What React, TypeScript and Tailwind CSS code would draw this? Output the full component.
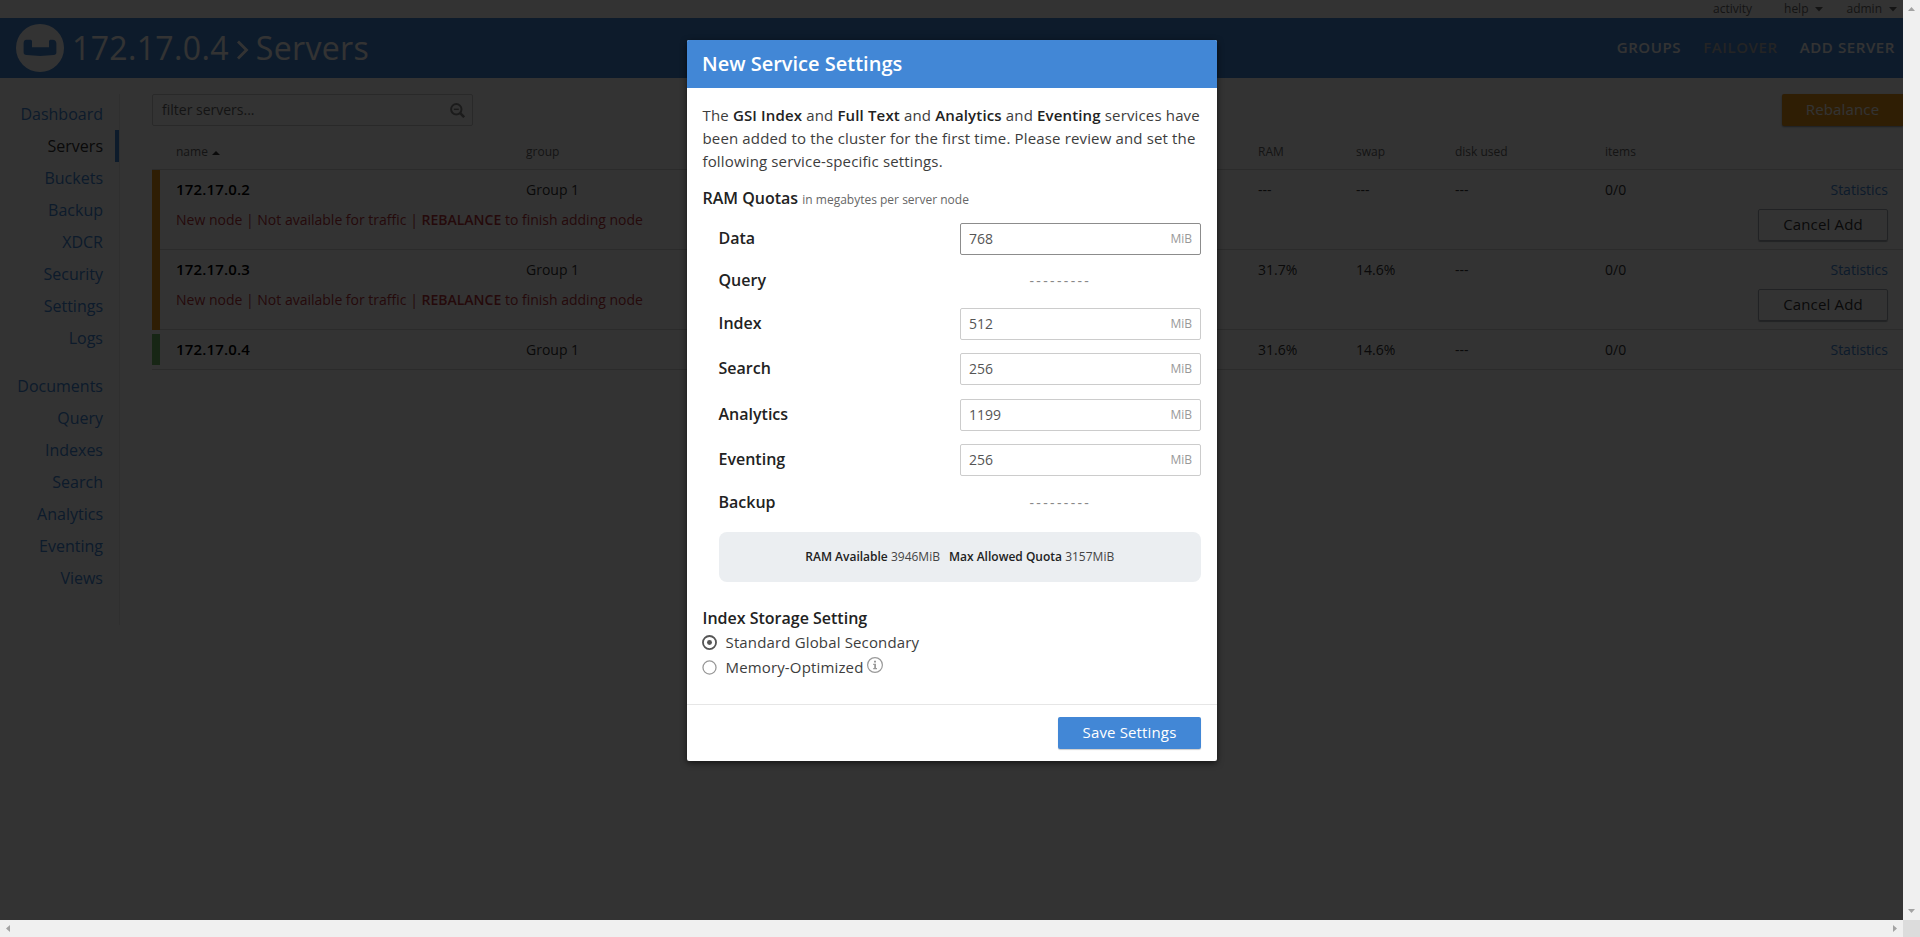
import type { ReactNode } from "react";

const primaryNav = ["Dashboard", "Servers", "Buckets", "Backup", "XDCR", "Security", "Settings", "Logs"];
const dataNav = ["Documents", "Query", "Indexes", "Search", "Analytics", "Eventing", "Views"];

type Server = { name: string; ram: string; swap: string; pending: boolean };

const servers: Server[] = [
  { name: "172.17.0.2", ram: "---", swap: "---", pending: true },
  { name: "172.17.0.3", ram: "31.7%", swap: "14.6%", pending: true },
  { name: "172.17.0.4", ram: "31.6%", swap: "14.6%", pending: false },
];

function Caret({ className }: { className: string }) {
  return (
    <svg className={className} width="8" height="5" viewBox="0 0 8 5" fill="currentColor">
      <path d="M0 0h8L4 4.600z" />
    </svg>
  );
}

function Logo() {
  return (
    <svg className="h-12 w-12 shrink-0" viewBox="0 0 48 48">
      <circle cx="24" cy="24" r="24" fill="#fff" />
      <path
        d="M7.6 19.5c0-2.4.8-3.8 2.6-3.8h3.8c1.4 0 2 .6 2 1.8v5.7h17v-5.7c0-1.200.6-1.800 2-1.800h1.800c2 0 3.600 1.400 3.600 3.800v8.700c0 1.700-.9 2.600-2.700 2.900-8.500 1.100-18.500 1.100-27.200 0-2-.3-2.900-1.200-2.900-2.900z"
        fill="#4287d6"
      />
    </svg>
  );
}

function NavItem({ label, active }: { label: string; active?: boolean }) {
  return (
    <li
      className={
        active
          ? "h-8 border-r-4 border-[#4287d6] pr-3 text-right text-[16px] leading-8 text-[#333]"
          : "h-8 pr-4 text-right text-[16px] leading-8 text-[#4287d6]"
      }
    >
      {label}
    </li>
  );
}

function ServerRow({ server }: { server: Server }) {
  return (
    <div className={server.pending ? "flex h-20" : "flex h-10 border-b border-[#d5d5d5]"}>
      <div className={server.pending ? "w-2 shrink-0 bg-[#e89418]" : "my-1 w-2 shrink-0 bg-[#75bd6c]"} />
      <div className={server.pending ? "w-[1743px] border-b border-[#d5d5d5] pt-2" : "w-[1743px] pt-2"}>
        <div className="flex h-6 text-[14px] leading-6 text-[#333]">
          <div className="w-[366px] pl-4 text-[15px] leading-[22px] font-semibold tracking-[0.15px] text-black">
            {server.name}
          </div>
          <div className="w-[732px]">Group 1</div>
          <div className="w-[98px]">{server.ram}</div>
          <div className="w-[99px]">{server.swap}</div>
          <div className="w-[150px]">---</div>
          <div className="flex-1">0/0</div>
          <div className="pr-[15px] text-[#4287d6]">Statistics</div>
        </div>
        {server.pending && (
          <div className="flex justify-between pl-4 pr-[15px]">
            <p className="pt-1.5 text-[14px] leading-6 text-[#b8323a]">
              New node | Not available for traffic | <span className="font-semibold">REBALANCE</span> to finish adding
              node
            </p>
            <button className="mt-[7px] h-8 w-[130px] rounded-xs border border-[#a5abb2] pb-px text-[15px] leading-none tracking-[0.15px] text-[#333] shadow-[0_1px_1px_#a5abb2]">
              Cancel Add
            </button>
          </div>
        )}
      </div>
    </div>
  );
}

function Page() {
  return (
    <div className="h-[920px] w-[1903px] overflow-hidden bg-white">
      <div className="flex h-[18px] items-center justify-end pr-1.5 text-[12px] leading-[18px] text-[#666]">
        <span className="mr-8">activity</span>
        <span>help</span>
        <Caret className="mr-[23px] ml-[7px]" />
        <span>admin</span>
        <Caret className="ml-[7px]" />
      </div>
      <header className="flex h-[60px] items-center bg-[#4287d6] pr-2 pl-4 text-white">
        <Logo />
        <h1 className="ml-2 flex flex-1 items-center text-[32px] tracking-[0.35px]">
          172.17.0.4
          <svg className="mt-1 mr-[7px] ml-[7px]" width="13" height="22" viewBox="0 0 13 22" fill="none" stroke="currentColor" strokeWidth="2.800">
            <path d="M2 2.500l8.500 8.500L2 19.500" />
          </svg>
          Servers
        </h1>
        <nav className="flex gap-[22px] pb-px text-[15px] font-semibold tracking-[0.6px]">
          <span>GROUPS</span>
          <span className="text-[#b3b3b3]">FAILOVER</span>
          <span>ADD SERVER</span>
        </nav>
      </header>
      <div className="flex pt-4">
        <aside className="h-[531px] w-[120px] shrink-0 border-r border-[#ebebeb] pt-1">
          <ul>
            {primaryNav.map((label) => (
              <NavItem key={label} label={label} active={label === "Servers"} />
            ))}
          </ul>
          <ul className="mt-4">
            {dataNav.map((label) => (
              <NavItem key={label} label={label} />
            ))}
          </ul>
        </aside>
        <main className="ml-8 w-[1751px] shrink-0">
          <div className="flex h-8 justify-between">
            <div className="flex w-[321px] items-center justify-between rounded-xs border border-[#ccc] pr-[7px] pb-px pl-[9px] text-[14px] text-[#666]">
              filter servers...
              <svg className="mt-px" width="15" height="15" viewBox="0 0 15 15" fill="none" stroke="#888" strokeWidth="2">
                <circle cx="6.300" cy="6.300" r="5.200" />
                <path d="M3.800 6.300h5" strokeWidth="1.500" />
                <path d="M10.200 10.200l4 4" strokeWidth="2.600" />
              </svg>
            </div>
            <button className="h-8 w-[121px] rounded-l-xs bg-[#e89418] pb-px text-[15px] tracking-[0.15px] text-white shadow-[0_1px_2px_#8c959f]">
              Rebalance
            </button>
          </div>
          <div className="flex h-11 border-b border-[#d5d5d5] pl-6 text-[12px] leading-[51px] text-[#666]">
            <div className="flex w-[350px] items-start">
              name
              <svg className="mt-[25px] ml-1" width="8" height="4" viewBox="0 0 8 4" fill="#333">
                <path d="M0 4h8L4 0z" />
              </svg>
            </div>
            <div className="w-[732px]">group</div>
            <div className="w-[98px]">RAM</div>
            <div className="w-[99px]">swap</div>
            <div className="w-[150px]">disk used</div>
            <div>items</div>
          </div>
          {servers.map((server) => (
            <ServerRow key={server.name} server={server} />
          ))}
        </main>
      </div>
    </div>
  );
}

function Quota({ label, value, className, active }: { label: string; value: string; className: string; active?: boolean }) {
  return (
    <div className={`flex h-8 justify-between ${className}`}>
      <label className="text-[16px] leading-[30px] font-semibold text-[#222]">{label}</label>
      <div
        className={
          active
            ? "flex w-[241px] items-center justify-between rounded-xs border border-[#8c8c8c] px-2 text-[14px] text-[#555]"
            : "flex w-[241px] items-center justify-between rounded-xs border border-[#ccc] px-2 text-[14px] text-[#555]"
        }
      >
        {value}
        <span className="text-[12px] text-[#999]">MiB</span>
      </div>
    </div>
  );
}

function NoQuota({ label, className }: { label: string; className: string }) {
  return (
    <div className={`flex h-6 ${className}`}>
      <span className="w-[311px] text-[16px] leading-6 font-semibold text-[#222]">{label}</span>
      <span className="text-[14px] leading-[25px] tracking-[2.35px] text-[#888]">---------</span>
    </div>
  );
}

function Radio({ checked }: { checked?: boolean }) {
  return (
    <svg className="mr-[9px] -ml-px" width="15" height="15" viewBox="0 0 14 14" fill="none">
      <circle cx="7" cy="7" r="6.100" stroke={checked ? "#555" : "#999"} strokeWidth={checked ? 1.700 : 1.200} />
      {checked && <circle cx="7" cy="7" r="2.300" fill="#555" />}
    </svg>
  );
}

function InfoIcon() {
  return (
    <svg className="mb-1 ml-1" width="16" height="16" viewBox="0 0 16 16" fill="none">
      <circle cx="8" cy="8" r="7.400" stroke="#999" strokeWidth="1.200" />
      <path d="M7 3.700h2v1.900H7zM6.200 6.700H9v4.300h1v1.200H6.200V11h1V7.900h-1z" fill="#999" />
    </svg>
  );
}

function Strong({ children }: { children: ReactNode }) {
  return <strong className="font-semibold text-[#222]">{children}</strong>;
}

function Dialog() {
  return (
    <section className="absolute top-10 left-[687px] flex h-[721px] w-[530px] flex-col overflow-hidden rounded-xs bg-white shadow-[0_2px_6px_rgba(0,0,0,0.6)]">
      <h2 className="h-12 shrink-0 bg-[#4287d6] pl-[15px] text-[20px] leading-[47px] font-semibold text-white">
        New Service Settings
      </h2>
      <div className="flex-1 pt-4 pr-4 pl-[15.5px]">
        <p className="text-[15px] leading-[22.8px] tracking-[0.15px] text-[#3d3d3d]">
          The <Strong>GSI Index</Strong> and <Strong>Full Text</Strong> and <Strong>Analytics</Strong> and{" "}
          <Strong>Eventing</Strong> services have been added to the cluster for the first time. Please review and set the
          following service-specific settings.
        </p>
        <h3 className="mt-[13.6px] h-6 text-[16px] leading-6 font-semibold text-[#222]">
          RAM Quotas <span className="text-[12px] font-normal text-[#666]">in megabytes per server node</span>
        </h3>
        <div className="pt-[13px] pl-4">
          <Quota className="" label="Data" value="768" active />
          <NoQuota className="mt-[13px]" label="Query" />
          <Quota className="mt-4" label="Index" value="512" />
          <Quota className="mt-[13px]" label="Search" value="256" />
          <Quota className="mt-[14px]" label="Analytics" value="1199" />
          <Quota className="mt-[13px]" label="Eventing" value="256" />
          <NoQuota className="mt-[14px]" label="Backup" />
          <div className="mt-[18px] flex h-[50px] items-center justify-center gap-[9px] rounded-lg bg-[#ebeef1] text-[12px] text-[#444]">
            <span>
              <Strong>RAM Available</Strong> 3946MiB
            </span>
            <span>
              <Strong>Max Allowed Quota</Strong> 3157MiB
            </span>
          </div>
        </div>
        <h3 className="mt-6 h-6 text-[16px] leading-6 font-semibold text-[#222]">Index Storage Setting</h3>
        <div className="text-[15px] tracking-[0.15px] text-[#3d3d3d]">
          <div className="flex h-[25px] items-center">
            <Radio checked />
            Standard Global Secondary
          </div>
          <div className="flex h-[25px] items-center">
            <Radio />
            Memory-Optimized
            <InfoIcon />
          </div>
        </div>
      </div>
      <footer className="flex h-[57px] shrink-0 items-start justify-end border-t border-[#e6e6e6] px-4 pt-3">
        <button className="h-8 w-[143px] rounded-xs bg-[#4287d6] pb-px text-[15px] tracking-[0.15px] text-white shadow-[0_1px_1px_rgba(0,0,0,0.2)]">
          Save Settings
        </button>
      </footer>
    </section>
  );
}

export default function App() {
  return (
    <div className="relative h-[937px] w-[1920px] overflow-hidden bg-[#f0f0f0] font-['Open_Sans',sans-serif]">
      <div className="flex">
        <Page />
        <div className="flex h-[920px] w-[17px] flex-col items-center justify-between py-[7px] text-[#a3a3a3]">
          <svg width="7" height="4" viewBox="0 0 7 4" fill="currentColor">
            <path d="M0 4h7L3.500 0z" />
          </svg>
          <svg width="7" height="4" viewBox="0 0 7 4" fill="currentColor">
            <path d="M0 0h7L3.500 4z" />
          </svg>
        </div>
      </div>
      <div className="flex h-[17px] items-center text-[#a3a3a3]">
        <div className="flex flex-1 items-center justify-between px-1.5">
          <svg width="4" height="7" viewBox="0 0 4 7" fill="currentColor">
            <path d="M4 0v7L0 3.500z" />
          </svg>
          <svg width="4" height="7" viewBox="0 0 4 7" fill="currentColor">
            <path d="M0 0v7l4-3.500z" />
          </svg>
        </div>
        <div className="h-full w-[17px] bg-[#dcdcdc]" />
      </div>
      <div className="absolute top-0 left-0 h-[920px] w-[1903px] bg-black/80" />
      <Dialog />
    </div>
  );
}
